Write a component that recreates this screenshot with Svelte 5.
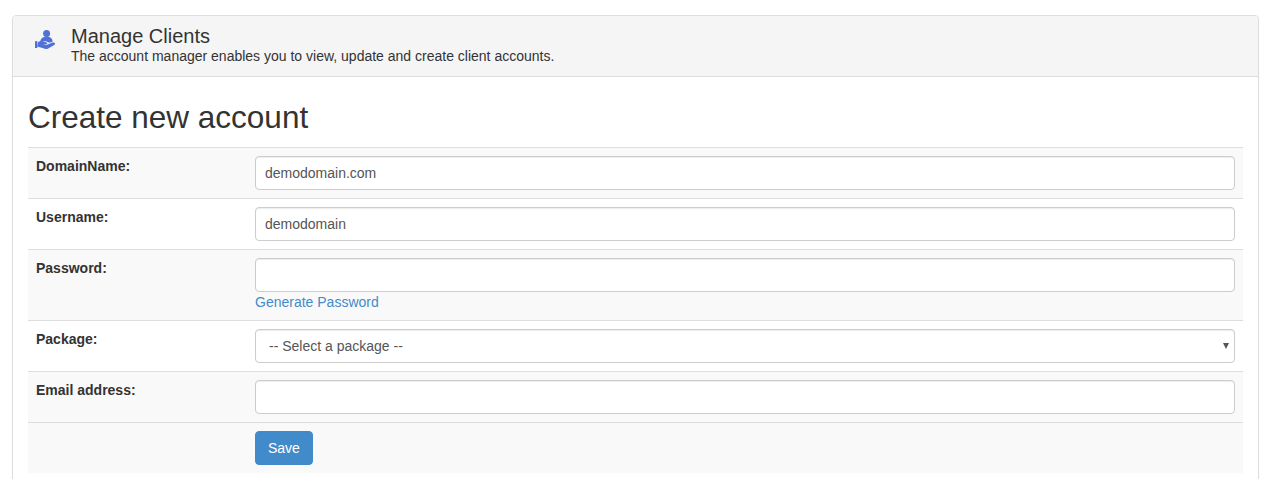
<script lang="ts">
  const rows = [
    { label: "DomainName:", value: "demodomain.com", type: "text" },
    { label: "Username:", value: "demodomain", type: "text" },
    { label: "Password:", value: "", type: "password", generate: true },
    { label: "Package:", type: "select" },
    { label: "Email address:", value: "", type: "text" },
  ];
</script>

<div class="page">
  <div class="panel">
    <div class="panel-heading">
      <svg class="icon" viewBox="0 0 20 20" width="20" height="20" aria-hidden="true">
        <circle cx="11.6" cy="3.5" r="3.5" />
        <path d="M5.4 12c-.3-3.4 2.6-5.3 6.2-5.3s6.3 1.9 6 5.1l-3.7 1c-1.8-1.6-5-2-8.5-.8z" />
        <rect x="0" y="11.2" width="2.4" height="6.8" />
        <path d="M3.2 11.9c1.8-1 3.5-1.2 5.2-.5l3.2 1c1.3.4 1.1 1.9-.3 1.8l-3.3-.1 3.4 .9 5.4-2.2c1.5-.6 2.9-.3 3.2.5.2.7-.1 1.3-.8 1.7l-6 3.5c-1.1.6-2.2.7-3.3.3l-7.7-2.2z" />
      </svg>
      <div class="heading-text">
        <div class="heading-title">Manage Clients</div>
        <div class="heading-sub">The account manager enables you to view, update and create client accounts.</div>
      </div>
    </div>
    <div class="panel-body">
      <h2>Create new account</h2>
      <table>
        <tbody>
          {#each rows as row}
            <tr>
              <th>{row.label}</th>
              <td>
                {#if row.type === "select"}
                  <div class="select-wrap">
                    <select class="control">
                      <option>-- Select a package --</option>
                    </select>
                  </div>
                {:else}
                  <input class="control" type={row.type} value={row.value} />
                {/if}
                {#if row.generate}
                  <a href="#generate" class="generate">Generate Password</a>
                {/if}
              </td>
            </tr>
          {/each}
          <tr>
            <th></th>
            <td><button type="button" class="save">Save</button></td>
          </tr>
        </tbody>
      </table>
    </div>
  </div>
</div>

<style>
  :global(body) {
    margin: 0;
    background: #fff;
    font-family: "Liberation Sans", Arial, sans-serif;
    font-size: 14px;
    line-height: 1.42857;
    color: #333;
  }
  .page {
    height: 479px;
    overflow: hidden;
    padding: 15px 18px 0 12px;
    box-sizing: border-box;
  }
  .panel {
    border: 1px solid #ddd;
    border-radius: 4px;
    background: #fff;
    box-shadow: 0 1px 1px rgba(0, 0, 0, 0.05);
  }
  .panel-heading {
    display: flex;
    align-items: center;
    height: 61px;
    box-sizing: border-box;
    padding: 0 0 2px 22px;
    gap: 16px;
    background: #f5f5f5;
    border-bottom: 1px solid #ddd;
    border-radius: 3px 3px 0 0;
  }
  .icon {
    fill: #4f70d6;
    flex: none;
    margin-bottom: 10px;
  }
  .heading-title {
    font-size: 20px;
    line-height: 22px;
  }
  .heading-sub {
    line-height: 18px;
  }
  .panel-body {
    padding: 15px;
  }
  h2 {
    margin: 8px 0 12px;
    font-size: 31.5px;
    font-weight: 500;
    line-height: 35px;
  }
  table {
    width: 100%;
    border-collapse: collapse;
    border-spacing: 0;
  }
  tr {
    border-top: 1px solid #ddd;
  }
  tr:nth-child(odd),
  tr:last-child {
    background: #f9f9f9;
  }
  th,
  td {
    padding: 8px;
    vertical-align: top;
    text-align: left;
  }
  th {
    width: 203px;
    font-weight: 700;
    line-height: 20px;
  }
  .control {
    display: block;
    width: 100%;
    height: 34px;
    box-sizing: border-box;
    padding: 6px 12px 6px 9px;
    border: 1px solid #ccc;
    border-radius: 4px;
    background: #fff;
    color: #555;
    font-family: inherit;
    font-size: 14px;
    line-height: 20px;
    box-shadow: inset 0 1px 1px rgba(0, 0, 0, 0.075);
  }
  .select-wrap {
    position: relative;
  }
  .select-wrap select {
    appearance: none;
    padding-left: 13px;
  }
  .select-wrap::after {
    content: "";
    position: absolute;
    top: 14px;
    right: 6px;
    border-top: 6px solid #555;
    border-left: 3.5px solid transparent;
    border-right: 3.5px solid transparent;
    pointer-events: none;
  }
  .generate {
    display: block;
    color: #428bca;
    text-decoration: none;
    line-height: 20px;
  }
  .save {
    display: block;
    height: 34px;
    padding: 6px 12px;
    border: 1px solid #428bca;
    border-radius: 4px;
    background: #428bca;
    color: #fff;
    font-family: inherit;
    font-size: 14px;
    line-height: 20px;
  }
</style>
